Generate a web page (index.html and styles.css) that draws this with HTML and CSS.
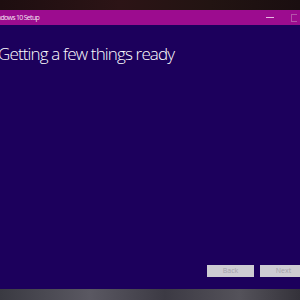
FILE: index.html
```html
<!DOCTYPE html>
<html>
<head>
<meta charset="utf-8">
<link rel="stylesheet" href="styles.css">
</head>
<body>
<div class="screen">
  <div class="desktop-top"></div>
  <div class="window">
    <div class="titlebar">
      <span class="title">Windows 10 Setup</span>
      <div class="controls">
        <span class="min"></span>
        <span class="max"></span>
      </div>
    </div>
    <div class="content">
      <h1 class="heading">Getting a few things ready</h1>
      <div class="buttons">
        <button class="btn">Back</button>
        <button class="btn">Next</button>
      </div>
    </div>
  </div>
  <div class="desktop-bottom"></div>
</div>
</body>
</html>
```
FILE: styles.css
```css
html, body {
  margin: 0;
  padding: 0;
  width: 300px;
  height: 300px;
  overflow: hidden;
}
.screen {
  display: flex;
  flex-direction: column;
  width: 300px;
  height: 300px;
  background: #3a3a40;
}
.desktop-top {
  height: 10px;
  background: linear-gradient(90deg, #1e0e10, #2c1416 40%, #221412 70%, #1a0e10);
}
.window {
  flex: 1;
  display: flex;
  flex-direction: column;
  overflow: hidden;
}
.titlebar {
  height: 15px;
  background: #9c0c8f;
  display: flex;
  align-items: center;
  justify-content: space-between;
}
.title {
  font-family: "Open Sans", "Noto Sans", sans-serif;
  font-size: 7px;
  letter-spacing: -0.7px;
  color: #f4e4f2;
  margin-left: -10px;
}
.controls {
  display: flex;
  align-items: center;
  gap: 17px;
  margin-right: 3px;
}
.min {
  width: 8px;
  height: 1px;
  background: #e8b8e2;
}
.max {
  width: 5px;
  height: 6px;
  border: 1px solid #b454aa;
  border-right: none;
}
.content {
  flex: 1;
  background: #1c005c;
  display: flex;
  flex-direction: column;
  justify-content: space-between;
  padding: 18px 0 12px 0;
}
.heading {
  margin: 0 0 0 -2px;
  font-family: "Open Sans", "Noto Sans", sans-serif;
  font-weight: 300;
  font-size: 17px;
  letter-spacing: -0.85px;
  line-height: 22px;
  color: #ffffff;
}
.buttons {
  display: flex;
  justify-content: flex-end;
  gap: 6px;
  margin-right: -7px;
}
.btn {
  width: 47px;
  height: 12px;
  padding: 0;
  border: none;
  background: #cdccd2;
  color: #a4a2aa;
  font-family: "Open Sans", "Noto Sans", sans-serif;
  font-size: 7px;
  line-height: 12px;
}
.desktop-bottom {
  height: 11px;
  background: linear-gradient(90deg, #3a3a42, #5a5862 30%, #3c3a44 55%, #54525a 80%, #34323a);
}
```
